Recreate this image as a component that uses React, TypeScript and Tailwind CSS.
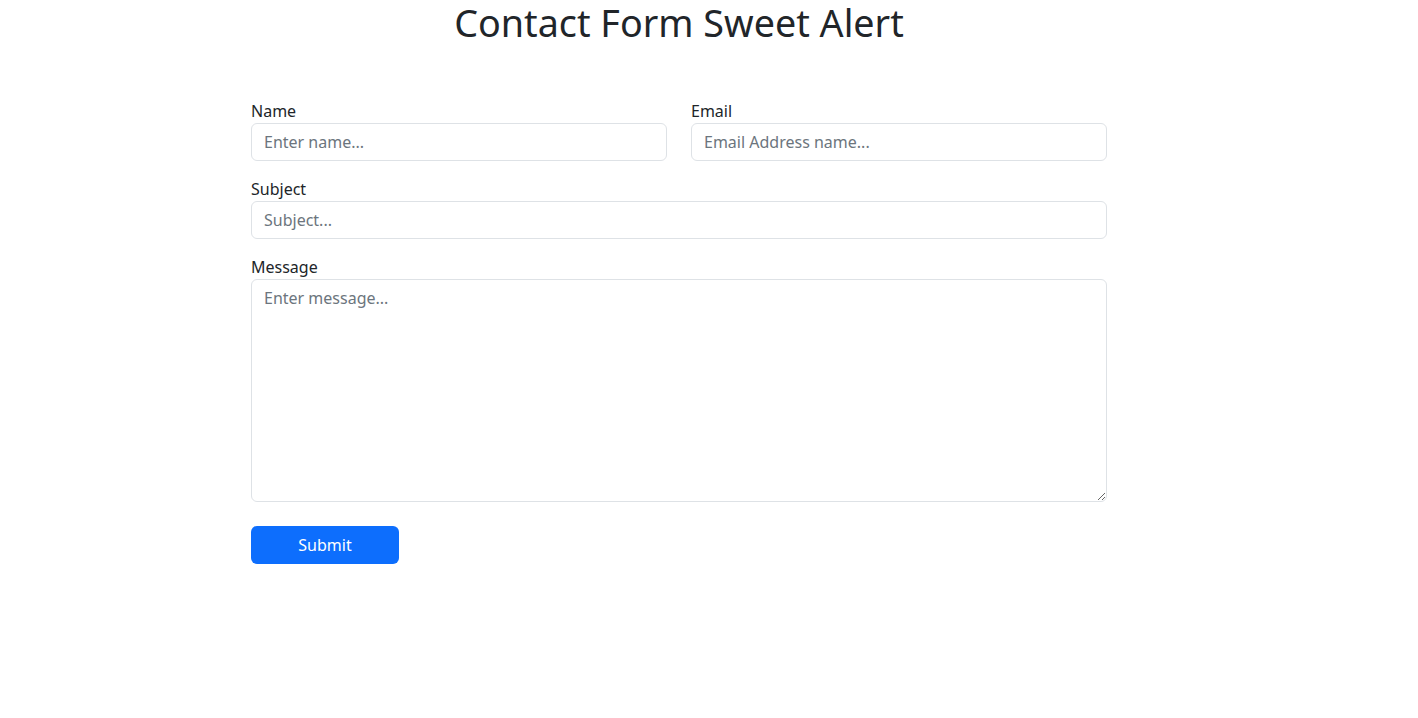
import React from 'react';

const font = { fontFamily: '"Segoe UI", "Noto Sans", "Liberation Sans", sans-serif' };

const inputClass =
  'block w-full h-[38px] rounded-[6px] border border-[#dee2e6] bg-white px-3 text-base text-[#212529] placeholder:text-[#6c757d] outline-none focus:border-[#86b7fe]';

const App: React.FC = () => {
  return (
    <div className="min-h-screen bg-white text-[#212529]" style={font}>
      <div className="ml-[251px] w-[856px]">
        <h1 className="text-center text-[37.7px] font-normal leading-[46px] text-[#212529]">
          Contact Form Sweet Alert
        </h1>

        <form className="mt-[53px]" onSubmit={(e) => e.preventDefault()}>
          <div className="grid grid-cols-2 gap-6">
            <div>
              <label className="block text-base leading-6">Name</label>
              <input type="text" className={inputClass} placeholder="Enter name..." />
            </div>
            <div>
              <label className="block text-base leading-6">Email</label>
              <input type="email" className={inputClass} placeholder="Email Address name..." />
            </div>
          </div>

          <div className="mt-4">
            <label className="block text-base leading-6">Subject</label>
            <input type="text" className={inputClass} placeholder="Subject..." />
          </div>

          <div className="mt-4">
            <label className="block text-base leading-6">Message</label>
            <textarea
              className="block w-full h-[223px] rounded-[6px] border border-[#dee2e6] bg-white px-3 py-1.5 text-base text-[#212529] placeholder:text-[#6c757d] outline-none"
              placeholder="Enter message..."
            />
          </div>

          <button
            type="submit"
            className="mt-6 h-[38px] w-[148px] rounded-[6px] bg-[#0d6efd] text-base text-white"
          >
            Submit
          </button>
        </form>
      </div>
    </div>
  );
};

export default App;
